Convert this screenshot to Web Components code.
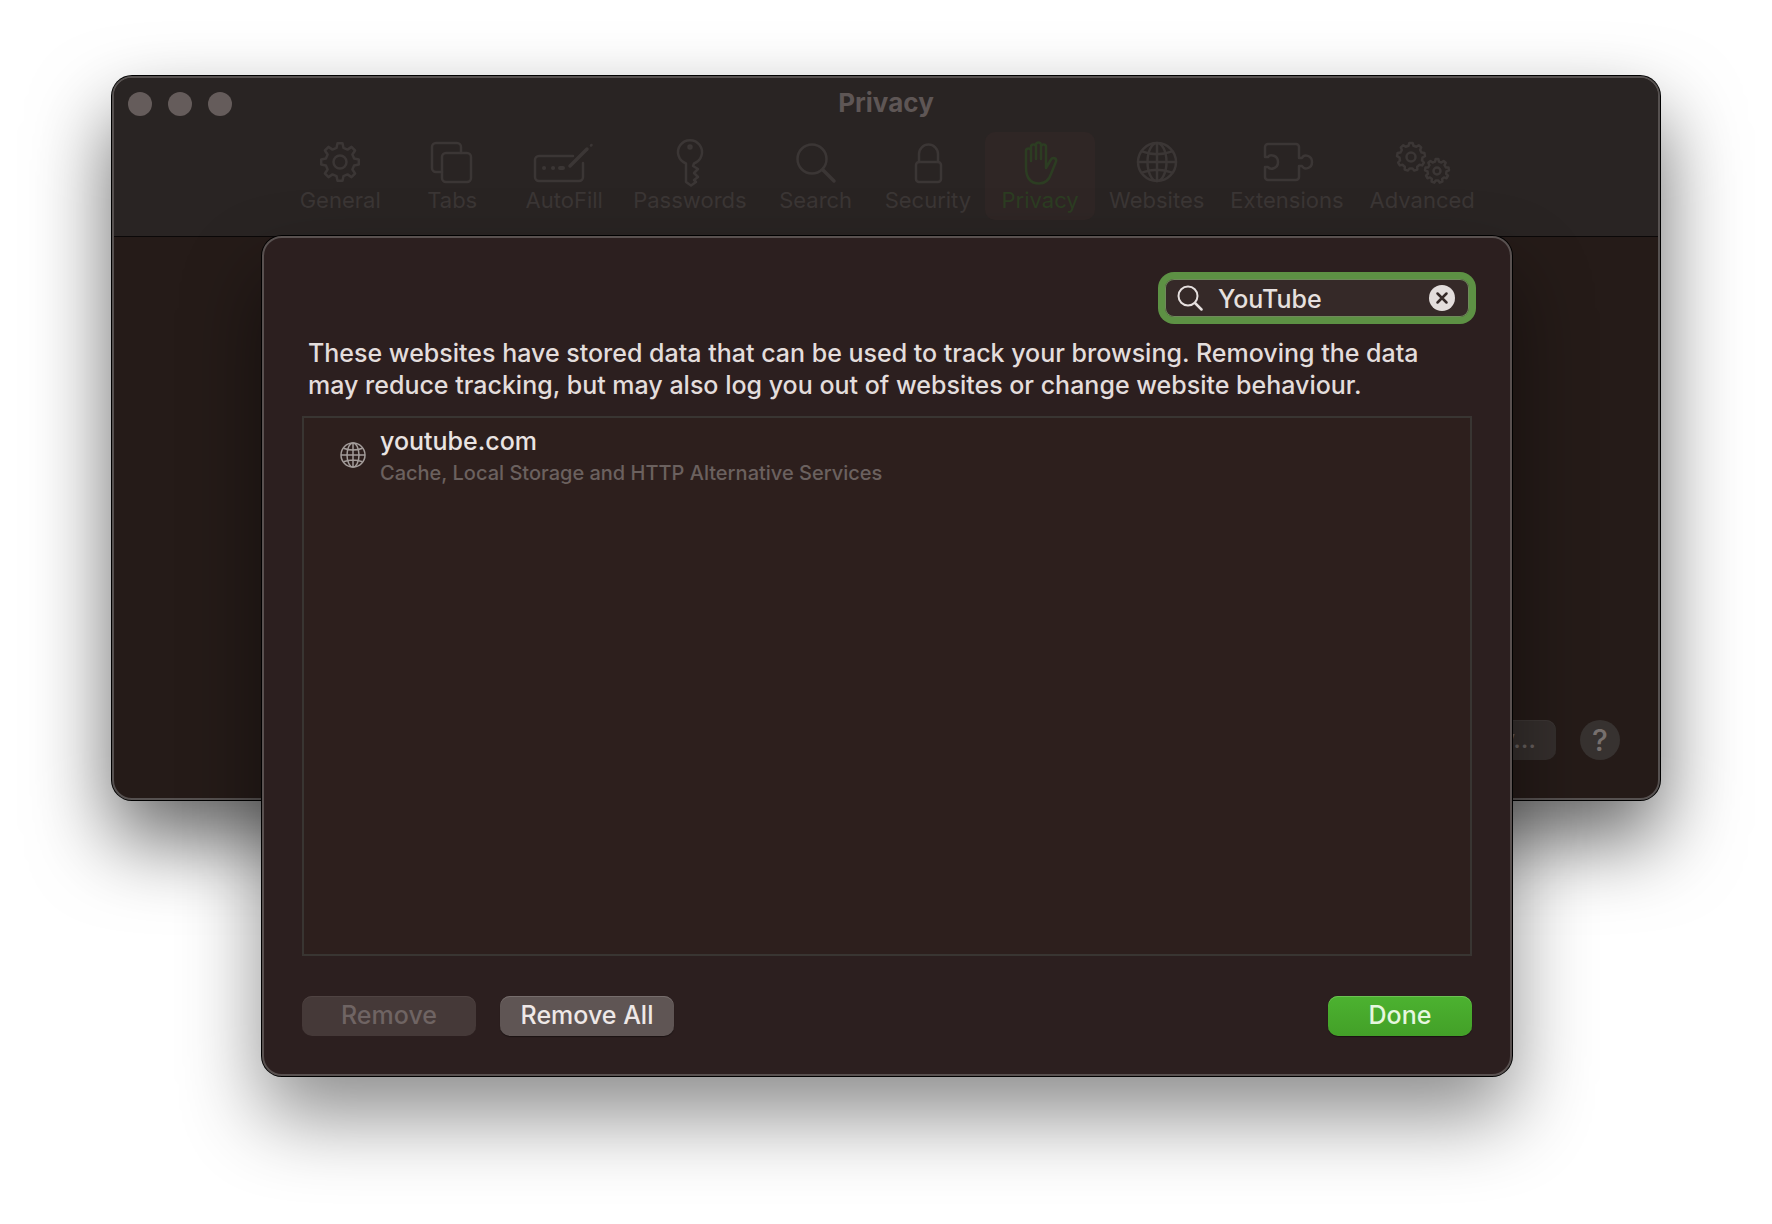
<!DOCTYPE html>
<html lang="en">
<head>
<meta charset="UTF-8">
<meta name="viewport" content="width=device-width, initial-scale=1.0">
<title>Privacy</title>
<style>
  body {
    margin: 0;
    min-height: 1224px;
    box-sizing: border-box;
    padding: 76px 112px 0;
    background: #fff;
    font-family: Inter, "Liberation Sans", sans-serif;
    font-size: 25px;
    font-weight: 500;
    line-height: 32px;
    color: #e3dddc;
  }
</style>
</head>
<body>
  <prefs-window heading="Privacy">
    <toolbar-item slot="toolbar" icon="general">General</toolbar-item>
    <toolbar-item slot="toolbar" icon="tabs">Tabs</toolbar-item>
    <toolbar-item slot="toolbar" icon="autofill">AutoFill</toolbar-item>
    <toolbar-item slot="toolbar" icon="passwords">Passwords</toolbar-item>
    <toolbar-item slot="toolbar" icon="search">Search</toolbar-item>
    <toolbar-item slot="toolbar" icon="security">Security</toolbar-item>
    <toolbar-item slot="toolbar" icon="privacy" selected>Privacy</toolbar-item>
    <toolbar-item slot="toolbar" icon="websites">Websites</toolbar-item>
    <toolbar-item slot="toolbar" icon="extensions">Extensions</toolbar-item>
    <toolbar-item slot="toolbar" icon="advanced">Advanced</toolbar-item>

    <push-button slot="actions" kind="dim">About Safari &amp; Privacy…</push-button>
    <push-button slot="actions" kind="help">?</push-button>

    <data-sheet slot="sheet">
      <search-field slot="search" value="YouTube"></search-field>
      <span slot="message">These websites have stored data that can be used to track your browsing. Removing the data may reduce tracking, but may also log you out of websites or change website behaviour.</span>
      <site-row slot="sites">
        youtube.com
        <span slot="detail">Cache, Local Storage and HTTP Alternative Services</span>
      </site-row>
      <push-button slot="left" disabled>Remove</push-button>
      <push-button slot="left">Remove All</push-button>
      <push-button slot="right" kind="default">Done</push-button>
    </data-sheet>
  </prefs-window>

<script>
// outline of a cog: teeth are flat-topped and joined with rounded corners
function gear(cx, cy, outer, inner, teeth) {
  const step = (Math.PI * 2) / teeth;
  const points = [];
  for (let i = 0; i < teeth; i++) {
    const a = i * step - Math.PI / 2;
    [[-0.31, inner], [-0.17, outer], [0.17, outer], [0.31, inner]].forEach(([t, r]) => {
      points.push(`${(cx + Math.cos(a + t * step) * r).toFixed(1)} ${(cy + Math.sin(a + t * step) * r).toFixed(1)}`);
    });
  }
  return `<path d="M${points.join('L')}Z"/>`;
}

function globe(cx, cy, r) {
  const k = r * 0.5;
  const y = r * 0.56;
  const x = r * 0.8;
  return `
    <circle cx="${cx}" cy="${cy}" r="${r}"/>
    <ellipse cx="${cx}" cy="${cy}" rx="${k}" ry="${r}"/>
    <path d="M${cx} ${cy - r}V${cy + r}M${cx - r} ${cy}H${cx + r}
      M${cx - x} ${cy - y}Q${cx} ${cy - y + r * 0.3} ${cx + x} ${cy - y}
      M${cx - x} ${cy + y}Q${cx} ${cy + y - r * 0.3} ${cx + x} ${cy + y}"/>`;
}

const ICONS = {
  general: gear(30, 24, 19, 14.5, 8) + '<circle cx="30" cy="24" r="6.5"/>',
  tabs: '<rect x="20" y="15" width="29" height="29" rx="4"/><path d="M20 34H14a4 4 0 0 1-4-4V9a4 4 0 0 1 4-4H35a4 4 0 0 1 4 4V15"/>',
  autofill: `
    <path d="M39 18H5a4 4 0 0 0-4 4V39a4 4 0 0 0 4 4H45a4 4 0 0 0 4-4V25"/>
    <path d="M36 28L53 11" stroke-width="3.5"/><path d="M57 7.500L57.500 7"/>
    <path d="M10 30h.1M19 30h.1M26 30h3" stroke-width="4"/>`,
  passwords: `
    <path d="M26 25.500A12 12 0 1 1 34 25.500L33 28L38 31L34 35L38 39L34 42L36 44L31 47.500L26 44Z"/>
    <circle cx="30" cy="9" r="1.500"/>`,
  search: '<circle cx="26" cy="21" r="14.500"/><path d="M37 32L48 43" stroke-width="3.500"/>',
  security: '<rect x="18" y="24" width="25" height="20" rx="3"/><path d="M21 24V16a9.500 9.500 0 0 1 19 0V24"/>',
  privacy: `
    <path d="M16 29V13a2.300 2.300 0 0 1 5 0V23M21 23V9a2.300 2.300 0 0 1 5 0V21M26 21V7a2.300 2.300 0 0 1 5 0V21M31 21V9a2.300 2.300 0 0 1 5 0V30
      M36 30L41 21.500C43 18.500 47 20.500 46 23.500L41 36C39 42 35 45.500 29 45.500C20 45.500 16 39 16 29"/>`,
  websites: globe(30, 24, 19),
  extensions: `
    <path d="M8 19V9a3 3 0 0 1 3-3H39a3 3 0 0 1 3 3V20H45C47 16 55 17 55 24C55 31 47 32 45 28H42V39a3 3 0 0 1-3 3H11a3 3 0 0 1-3-3V29H11
      C13 32 21 31 21 24C21 17 13 16 11 19Z"/>`,
  advanced:
    gear(19, 19, 14, 11.5, 9) + '<circle cx="19" cy="19" r="4.500"/>' +
    gear(45, 33, 12, 9.5, 9) + '<circle cx="45" cy="33" r="3.500"/>',
};

class PrefsWindow extends HTMLElement {
  constructor() {
    super();
    this.attachShadow({ mode: 'open' });
  }

  static get styles() {
    return /* css */ `
    :host {
      display: block;
      position: relative;
      border: 2px solid #565150;
      border-radius: 20px;
      background: #251b18;
      box-shadow: 0 0 0 1px #000, 0 40px 80px rgba(0, 0, 0, 0.6);
    }

    header {
      border-bottom: 1px solid #0b0808;
      border-radius: 18px 18px 0 0;
      background: #292423;
    }

    .titlebar {
      display: grid;
      grid-template-columns: 1fr auto 1fr;
      align-items: center;
      height: 54px;
      box-sizing: border-box;
      padding: 0 14px 2px;
    }

    .lights {
      display: flex;
      gap: 16px;
    }

    .lights i {
      width: 24px;
      height: 24px;
      border-radius: 50%;
      background: #655c5b;
    }

    h1 {
      margin: 0;
      padding-bottom: 2px;
      font-size: 26px;
      font-weight: 700;
      color: #5e5655;
    }

    nav {
      display: flex;
      justify-content: center;
      gap: 2px;
      padding-bottom: 16px;
    }

    .pane {
      display: flex;
      align-items: flex-end;
      justify-content: flex-end;
      gap: 24px;
      min-height: 561px;
      box-sizing: border-box;
      padding: 38px;
    }

    .sheet {
      position: absolute;
      top: 158px;
      left: 148px;
      right: 146px;
    }
    `;
  }

  connectedCallback() {
    this.shadowRoot.innerHTML = /* html */ `
      <style>${PrefsWindow.styles}</style>
      <header>
        <div class="titlebar">
          <div class="lights"><i></i><i></i><i></i></div>
          <h1>${this.getAttribute('heading')}</h1>
        </div>
        <nav><slot name="toolbar"></slot></nav>
      </header>
      <div class="pane"><slot name="actions"></slot></div>
      <div class="sheet"><slot name="sheet"></slot></div>
    `;
  }
}

class ToolbarItem extends HTMLElement {
  constructor() {
    super();
    this.attachShadow({ mode: 'open' });
  }

  static get styles() {
    return /* css */ `
    :host {
      display: block;
      color: #3b3635;
    }

    :host([selected]) {
      color: #2c3d22;
    }

    button {
      display: flex;
      flex-direction: column;
      align-items: center;
      min-width: 110px;
      height: 88px;
      padding: 6px 12px 0;
      border: 0;
      border-radius: 10px;
      background: none;
      color: inherit;
      font: 22px/28px Inter, "Liberation Sans", sans-serif;
    }

    :host([selected]) button {
      background: #2f2625;
    }

    svg {
      width: 60px;
      height: 48px;
      fill: none;
      stroke: currentColor;
      stroke-width: 2.5;
      stroke-linecap: round;
      stroke-linejoin: round;
      overflow: visible;
    }
    `;
  }

  connectedCallback() {
    this.shadowRoot.innerHTML = /* html */ `
      <style>${ToolbarItem.styles}</style>
      <button type="button">
        <svg viewBox="0 0 60 48" aria-hidden="true">${ICONS[this.getAttribute('icon')]}</svg>
        <slot></slot>
      </button>
    `;
  }
}

class PushButton extends HTMLElement {
  constructor() {
    super();
    this.attachShadow({ mode: 'open' });
  }

  static get styles() {
    return /* css */ `
    :host {
      display: block;
    }

    button {
      display: block;
      min-width: 174px;
      height: 40px;
      padding: 0 20px 2px;
      border: 0;
      border-radius: 10px;
      background: #5f5554;
      box-shadow: inset 0 1px #766d6c, 0 1px 1px rgba(0, 0, 0, 0.4);
      color: #eee8e7;
      font: 500 25px/38px Inter, "Liberation Sans", sans-serif;
      white-space: nowrap;
    }

    button:disabled {
      background: #453938;
      box-shadow: inset 0 1px #4f4342;
      color: #6f6463;
    }

    :host([kind="default"]) button {
      min-width: 144px;
      background: linear-gradient(#4cb230, #43a028);
      box-shadow: inset 0 1px #6cc253, 0 1px 1px rgba(0, 0, 0, 0.4);
      color: #e6f7df;
    }

    :host([kind="dim"]) button {
      background: #352f2d;
      box-shadow: inset 0 1px #3d3735;
      color: #67605e;
    }

    :host([kind="help"]) button {
      min-width: 40px;
      padding: 0;
      border-radius: 50%;
      background: #373230;
      box-shadow: none;
      color: #77706e;
      font-size: 30px;
    }
    `;
  }

  connectedCallback() {
    this.shadowRoot.innerHTML = /* html */ `
      <style>${PushButton.styles}</style>
      <button type="button" ${this.hasAttribute('disabled') ? 'disabled' : ''}><slot></slot></button>
    `;
  }
}

class SearchField extends HTMLElement {
  constructor() {
    super();
    this.attachShadow({ mode: 'open' });
  }

  static get styles() {
    return /* css */ `
    :host {
      display: block;
      width: 304px;
    }

    label {
      display: flex;
      align-items: center;
      height: 38px;
      box-sizing: border-box;
      padding: 0 14px 0 12px;
      border-radius: 9px;
      background: #352928;
      box-shadow: inset 0 0 0 1px #6f8a5b, 0 0 0 7px #5d9144;
    }

    svg {
      flex: none;
      width: 26px;
      height: 26px;
      fill: none;
      stroke: #e6e0df;
      stroke-width: 2;
      stroke-linecap: round;
    }

    input {
      flex: 1;
      min-width: 0;
      height: 36px;
      margin: 0 12px 0 15px;
      padding: 2px 0 0;
      border: 0;
      outline: 0;
      background: none;
      color: #e6e0df;
      font: 500 25px/34px Inter, "Liberation Sans", sans-serif;
    }

    button {
      width: 26px;
      height: 26px;
      padding: 0;
      border: 0;
      background: none;
    }

    .clear circle {
      fill: #e3dddc;
      stroke: none;
    }

    .clear path {
      stroke: #352928;
      stroke-width: 2.5;
    }
    `;
  }

  connectedCallback() {
    this.shadowRoot.innerHTML = /* html */ `
      <style>${SearchField.styles}</style>
      <label>
        <svg viewBox="0 0 26 26" aria-hidden="true"><circle cx="11" cy="11" r="9.500"/><path d="M18 18L24.500 24.500" stroke-width="2.500"/></svg>
        <input type="text" aria-label="Search" value="${this.getAttribute('value')}">
        <button type="button" aria-label="Clear">
          <svg class="clear" viewBox="0 0 26 26"><circle cx="13" cy="13" r="13"/><path d="M8.500 8.500L17.500 17.500M17.500 8.500L8.500 17.500"/></svg>
        </button>
      </label>
    `;
  }
}

class SiteRow extends HTMLElement {
  constructor() {
    super();
    this.attachShadow({ mode: 'open' });
  }

  static get styles() {
    return /* css */ `
    :host {
      display: flex;
      align-items: center;
      gap: 14px;
      padding: 7px 36px;
    }

    svg {
      flex: none;
      width: 26px;
      height: 26px;
      margin-bottom: 4px;
      fill: none;
      stroke: #a39c9a;
      stroke-width: 1.5;
    }

    .name {
      color: #e9e3e2;
    }

    .detail {
      font-size: 20px;
      color: #6b615f;
    }
    `;
  }

  connectedCallback() {
    this.setAttribute('role', 'listitem');
    this.shadowRoot.innerHTML = /* html */ `
      <style>${SiteRow.styles}</style>
      <svg viewBox="0 0 26 26" aria-hidden="true">${globe(13, 13, 12)}</svg>
      <div>
        <div class="name"><slot></slot></div>
        <div class="detail"><slot name="detail"></slot></div>
      </div>
    `;
  }
}

class DataSheet extends HTMLElement {
  constructor() {
    super();
    this.attachShadow({ mode: 'open' });
  }

  static get styles() {
    return /* css */ `
    :host {
      display: block;
      padding: 41px 38px 38px;
      border: 2px solid #595150;
      border-radius: 20px;
      background: #2c1f1f;
      box-shadow: 0 0 0 1px #000, 0 40px 80px rgba(0, 0, 0, 0.45);
    }

    .search {
      display: flex;
      justify-content: flex-end;
      padding-right: 3px;
    }

    p {
      margin: 20px 6px 15px;
    }

    .sites {
      min-height: 540px;
      box-sizing: border-box;
      border: 2px solid #393532;
      background: #2d1f1d;
    }

    footer {
      display: flex;
      gap: 24px;
      margin-top: 40px;
    }

    .right {
      margin-left: auto;
    }
    `;
  }

  connectedCallback() {
    this.setAttribute('role', 'dialog');
    this.shadowRoot.innerHTML = /* html */ `
      <style>${DataSheet.styles}</style>
      <div class="search"><slot name="search"></slot></div>
      <p><slot name="message"></slot></p>
      <div class="sites" role="list"><slot name="sites"></slot></div>
      <footer>
        <slot name="left"></slot>
        <div class="right"><slot name="right"></slot></div>
      </footer>
    `;
  }
}

customElements.define('prefs-window', PrefsWindow);
customElements.define('toolbar-item', ToolbarItem);
customElements.define('push-button', PushButton);
customElements.define('search-field', SearchField);
customElements.define('site-row', SiteRow);
customElements.define('data-sheet', DataSheet);
</script>
</body>
</html>
